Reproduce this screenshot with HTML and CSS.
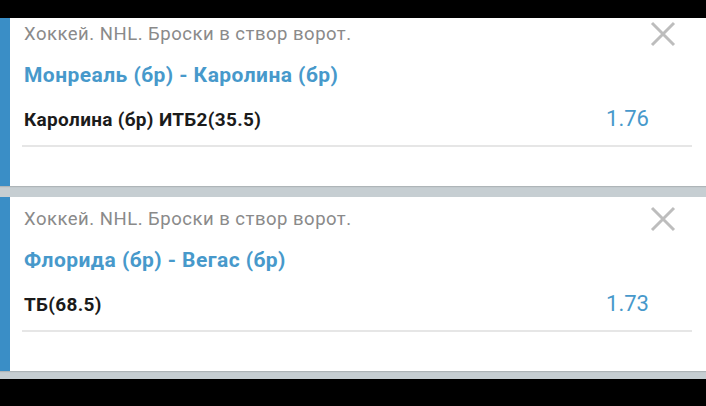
FILE: index.html
```html
<!DOCTYPE html>
<html lang="ru">
<head>
<meta charset="utf-8">
<title>Купон</title>
<link rel="stylesheet" href="styles.css">
</head>
<body>
<div class="screen">
  <div class="topbar"></div>
  <div class="list">
    <div class="card first">
      <div class="head">
        <span class="league">Хоккей. NHL. Броски в створ ворот.</span>
        <span class="close"><svg viewBox="0 0 28 28" width="28" height="28"><path d="M3 3 L25 25 M25 3 L3 25" stroke="#bdbdbd" stroke-width="3" fill="none"/></svg></span>
      </div>
      <div class="match">Монреаль (бр) - Каролина (бр)</div>
      <div class="bet">
        <span class="outcome">Каролина (бр) ИТБ2(35.5)</span>
        <span class="odds">1.76</span>
      </div>
      <div class="divider"></div>
    </div>
    <div class="card">
      <div class="head">
        <span class="league">Хоккей. NHL. Броски в створ ворот.</span>
        <span class="close"><svg viewBox="0 0 28 28" width="28" height="28"><path d="M3 3 L25 25 M25 3 L3 25" stroke="#bdbdbd" stroke-width="3" fill="none"/></svg></span>
      </div>
      <div class="match">Флорида (бр) - Вегас (бр)</div>
      <div class="bet">
        <span class="outcome">ТБ(68.5)</span>
        <span class="odds">1.73</span>
      </div>
      <div class="divider"></div>
    </div>
  </div>
  <div class="bottombar"></div>
</div>
</body>
</html>
```

FILE: styles.css
```css
* { box-sizing: border-box; }
html, body { margin: 0; padding: 0; background: #000; }
body { font-family: Roboto, "Noto Sans", sans-serif; }

.screen {
  width: 706px;
  height: 406px;
  display: flex;
  flex-direction: column;
  overflow: hidden;
}
.topbar { height: 18px; background: #000; flex: none; }
.bottombar { flex: 1; background: #000; }

.list {
  height: 361px;
  flex: none;
  background: #c6ced2;
  overflow: hidden;
  display: flex;
  flex-direction: column;
  gap: 11px;
}

.card {
  flex: none;
  height: 174px;
  background: #fff;
  border-left: 10px solid #3a8ec6;
  padding: 8px 14px 0 12px;
  display: flex;
  flex-direction: column;
  box-shadow: 0 1px 1px rgba(0,0,0,0.12);
}
.card.first { margin-top: -6px; }

.head {
  display: flex;
  align-items: center;
  justify-content: space-between;
  height: 28px;
  padding-left: 2px;
}
.league {
  font-size: 18.5px;
  letter-spacing: 0.5px;
  line-height: 24px;
  color: #8a8a8a;
}
.close {
  width: 28px;
  height: 28px;
  margin-right: 15px;
  display: block;
}
.close svg { display: block; }

.match {
  margin-top: 14px;
  padding-left: 2px;
  font-size: 21px;
  letter-spacing: 0.45px;
  line-height: 26px;
  font-weight: 700;
  color: #4799cb;
}

.bet {
  margin-top: 19px;
  padding-left: 2px;
  display: flex;
  align-items: baseline;
  justify-content: space-between;
  height: 24px;
}
.outcome {
  font-size: 19px;
  letter-spacing: 0.33px;
  line-height: 24px;
  font-weight: 700;
  color: #1b1b1b;
}
.odds {
  font-size: 22px;
  line-height: 24px;
  color: #4799cb;
  margin-right: 43px;
}

.divider {
  margin-top: 14px;
  height: 2px;
  background: #e6e6e6;
}
```
